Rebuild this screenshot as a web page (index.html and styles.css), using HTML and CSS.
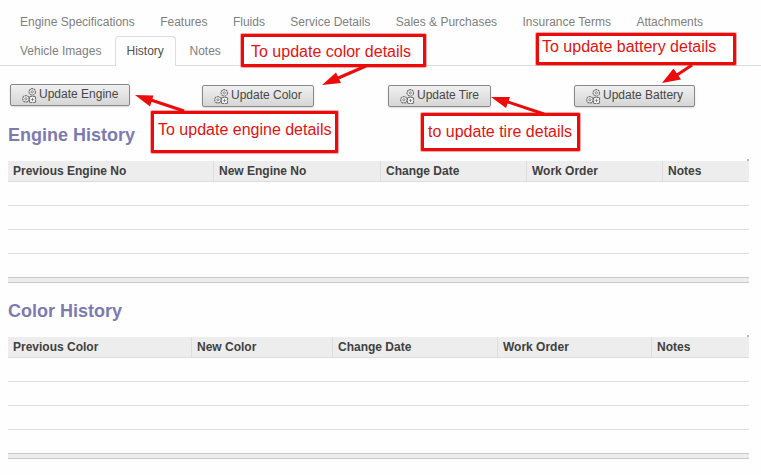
FILE: index.html
```html
<!DOCTYPE html>
<html lang="en">
<head>
<meta charset="utf-8">
<title>Vehicle History</title>
<link rel="stylesheet" href="styles.css">
</head>
<body>
<svg class="defs" width="0" height="0">
  <symbol id="gears" viewBox="0 0 15 16">
    <g fill="#f4f4f4" stroke="#727272" stroke-width="1.200">
      <circle cx="10.300" cy="3.900" r="3.200" stroke-dasharray="2.200 .5"/>
      <circle cx="3.900" cy="10.800" r="3.200" stroke-dasharray="2.200 .5"/>
      <rect x="7.500" y="8.500" width="6" height="6" stroke-dasharray="2.400 .6"/>
    </g>
    <g fill="none" stroke="#777" stroke-width=".9"><circle cx="10.300" cy="3.900" r="1.100"/><circle cx="3.900" cy="10.800" r="1.100"/><path d="M10.500 10v3M9.300 11.500h2.400"/></g>
  </symbol>
</svg>
<nav class="tabs">
  <a class="tab">Engine Specifications</a><a class="tab">Features</a><a class="tab">Fluids</a><a class="tab">Service Details</a><a class="tab">Sales &amp; Purchases</a><a class="tab">Insurance Terms</a><a class="tab">Attachments</a><a class="tab">Vehicle Images</a><a class="tab active">History</a><a class="tab">Notes</a>
</nav>
<div class="actions">
  <button class="btn engine"><svg><use href="#gears"/></svg>Update Engine</button>
  <button class="btn color"><svg><use href="#gears"/></svg>Update Color</button>
  <button class="btn tire"><svg><use href="#gears"/></svg>Update Tire</button>
  <button class="btn battery"><svg><use href="#gears"/></svg>Update Battery</button>
</div>
<section class="history">
  <h2>Engine History</h2>
  <div class="grid">
    <div class="head engine-cols"><span>Previous Engine No</span><span>New Engine No</span><span>Change Date</span><span>Work Order</span><span>Notes</span></div>
    <div class="row"></div><div class="row"></div><div class="row"></div><div class="row last"></div>
    <div class="foot"></div>
  </div>
</section>
<section class="history">
  <h2>Color History</h2>
  <div class="grid">
    <div class="head color-cols"><span>Previous Color</span><span>New Color</span><span>Change Date</span><span>Work Order</span><span>Notes</span></div>
    <div class="row"></div><div class="row"></div><div class="row"></div><div class="row last"></div>
    <div class="foot"></div>
  </div>
</section>
<svg class="arrows" viewBox="0 0 761 475">
  <g stroke="#ec0b0b" stroke-width="3">
    <path d="M184 111L148 99M366 66L336 79M692 65L677 75M544 114L505 101"/>
  </g>
  <g fill="#ec0b0b">
    <path d="M135 95L153.500 95.500L150 106.500Z"/>
    <path d="M322 85L336 72.500L341 83Z"/>
    <path d="M662 83L673.500 68.500L681 79.500Z"/>
    <path d="M491 97L510 97L506 108Z"/>
  </g>
</svg>
<div class="note note-color">To update color details</div>
<div class="note note-battery">To update battery details</div>
<div class="note note-engine">To update engine details</div>
<div class="note note-tire">to update tire details</div>
</body>
</html>
```
FILE: styles.css
```css
* { box-sizing: border-box; }
body {
  margin: 0;
  width: 761px;
  height: 475px;
  overflow: hidden;
  position: relative;
  background: #fefefe;
  color: #404040;
  font: 12px/18px "Liberation Sans", Arial, sans-serif;
}
.defs { position: absolute; }
.tabs {
  display: flex;
  flex-wrap: wrap;
  height: 66px;
  padding: 7px 20px 0 8px;
  border-bottom: 1px solid #ddd;
}
.tab {
  height: 29px;
  padding: 5px 11px 0;
  margin-right: 1.4px;
  border: 1px solid transparent;
  border-bottom: 0;
  border-radius: 4px 4px 0 0;
  color: #808080;
}
.tab.active {
  height: 30px;
  padding: 5px 10.7px 0;
  margin-right: 2px;
  background: #fefefe;
  border-color: #ddd;
  color: #505050;
}
.actions {
  display: grid;
  grid-template-columns: 192px 186px 186px 1fr;
  align-items: start;
  height: 52px;
  padding: 19px 0 0 10px;
}
.btn {
  display: flex;
  align-items: flex-start;
  height: 22px;
  margin: 0;
  padding: 0 0 0 11px;
  border: 1px solid #888;
  border-radius: 2px;
  background: linear-gradient(#f0f0f0, #d6d6d6);
  box-shadow: 0 1px 2px rgba(0, 0, 0, .15);
  color: #484848;
  font: inherit;
  text-align: left;
}
.btn svg { width: 15px; height: 16px; margin: 3px 2px 0 0; flex: none; }
.engine { width: 120px; margin-top: -1px; }
.color { width: 112px; }
.tire { width: 103px; }
.battery { width: 121px; }
.history { height: 176px; padding: 5px 12px 0 8px; }
.history h2 {
  margin: 0 0 14px;
  color: #7c7bb1;
  font-size: 18px;
  line-height: 24px;
}
.grid { position: relative; }
.grid::after {
  content: "";
  position: absolute;
  top: -2px;
  right: 0;
  width: 2px;
  height: 2px;
  background: #bbb;
}
.head {
  display: grid;
  height: 21px;
  background: #ededed;
  border-bottom: 1px solid #ddd;
  font-weight: bold;
  line-height: 20px;
}
.head span { padding-left: 5px; border-right: 1px solid #ddd; }
.head span:last-child { border-right: 0; }
.engine-cols { grid-template-columns: 206px 167px 146px 136px 1fr; }
.color-cols { grid-template-columns: 184px 141px 165px 154px 1fr; }
.row { height: 24px; border-bottom: 1px solid #ddd; }
.row.last { height: 23px; border-bottom: 0; }
.foot { height: 6px; background: #ededed; border: solid #c8c8c8; border-width: 1px 0; }
.arrows { position: absolute; inset: 0; width: 761px; height: 475px; }
.note {
  position: absolute;
  border: 3px solid #ec0b0b;
  border-radius: 1px;
  background: #fff;
  box-shadow: 0 0 0 1px rgba(236, 11, 11, .35);
  color: #e31212;
  font-size: 16px;
  line-height: 18px;
  white-space: nowrap;
}
.note-color { left: 241px; top: 34px; width: 185px; height: 33px; padding: 6px 0 0 7px; }
.note-battery { left: 536px; top: 33px; width: 200px; height: 32px; padding: 2px 0 0 3px; }
.note-engine { left: 151px; top: 111px; width: 187px; height: 42px; padding: 7px 0 0 4px; }
.note-tire { left: 421px; top: 113px; width: 159px; height: 38px; padding: 7px 0 0 4px; }
```
